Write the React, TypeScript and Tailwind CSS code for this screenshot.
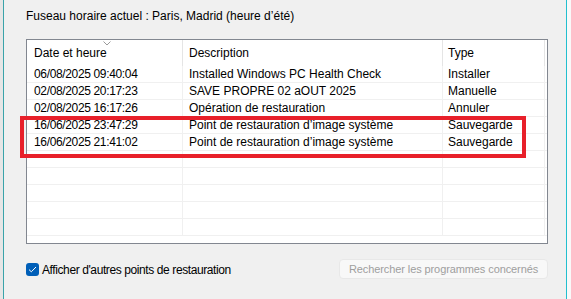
import React from 'react'

const rows = [
  ['06/08/2025 09:40:04', 'Installed Windows PC Health Check', 'Installer'],
  ['02/08/2025 20:17:23', 'SAVE PROPRE 02 aOUT 2025', 'Manuelle'],
  ['02/08/2025 16:17:26', 'Opération de restauration', 'Annuler'],
  ['16/06/2025 23:47:29', 'Point de restauration d’image système', 'Sauvegarde'],
  ['16/06/2025 21:41:02', 'Point de restauration d’image système', 'Sauvegarde'],
  ['', '', ''],
  ['', '', ''],
  ['', '', ''],
  ['', '', ''],
  ['', '', ''],
]

export default function App() {
  return (
    <div
      className="relative flex h-[299px] w-[571px] overflow-hidden bg-[#f0f0f0] text-[12px] text-black"
      style={{ fontFamily: '"Segoe UI", "Liberation Sans", Arial, sans-serif' }}
    >
      {/* window frame, left */}
      <div className="w-[3px] shrink-0 bg-[#e6e6e6]" />
      <div className="w-px shrink-0 bg-[#3aa3aa]" />

      <div className="flex w-[562px] shrink-0 flex-col">
        <p className="ml-[22px] mt-[7px] h-[18px] leading-[18px]">
          Fuseau horaire actuel : Paris, Madrid (heure d’été)
        </p>

        {/* restore points list */}
        <div className="ml-[22px] mt-[14px] h-[205px] w-[522px] overflow-hidden border border-[#828790] bg-white">
          <div className="relative flex h-[26px] items-center">
            <div className="flex h-full w-[156px] items-center border-r border-[#e5e5e5] pl-[7px]">Date et heure</div>
            <div className="flex h-full w-[260px] items-center border-r border-[#e5e5e5] pl-[6px]">Description</div>
            <div className="flex h-full w-[102px] items-center border-r border-[#e5e5e5] pl-[5px]">Type</div>
            <svg className="absolute left-[76px] top-[1px]" width="8" height="5" viewBox="0 0 8 5" fill="none">
              <path d="M0.5 0.5L4 4L7.5 0.5" stroke="#9a9a9a" strokeWidth="1" />
            </svg>
          </div>
          {rows.map((r, i) => (
            <div key={i} className="flex h-[17px] border-b border-[#f0f0f0] leading-[16px]">
              <div className="w-[156px] border-r border-[#f0f0f0] pl-[7px] whitespace-nowrap tracking-[-0.35px]">{r[0]}</div>
              <div className="w-[260px] border-r border-[#f0f0f0] pl-[6px] whitespace-nowrap">{r[1]}</div>
              <div className="w-[102px] border-r border-[#f0f0f0] pl-[5px] whitespace-nowrap">{r[2]}</div>
            </div>
          ))}
        </div>

        <div className="ml-[22px] mt-[15px] flex w-[522px] items-center justify-between">
          <label className="mt-[1px] flex items-center gap-[3px]">
            <span className="flex h-[13px] w-[13px] items-center justify-center rounded-[3px] bg-[#005fb8]">
              <svg width="9" height="7" viewBox="0 0 9 7" fill="none">
                <path d="M1 3.6L3.3 5.8L8 1" stroke="white" strokeWidth="1" />
              </svg>
            </span>
            <span className="leading-[16px] tracking-[-0.4px]">Afficher d'autres points de restauration</span>
          </label>
          <button
            disabled
            className="flex h-[20px] w-[209px] items-center whitespace-nowrap rounded-[4px] border border-[#e8e8e8] bg-[#f8f8f8] pl-[9px] text-[11px] tracking-[-0.1px] text-[#9e9e9e]"
          >
            Rechercher les programmes concernés
          </button>
        </div>
      </div>

      {/* window frame, right */}
      <div className="w-px shrink-0 bg-[#22bfcf]" />
      <div className="flex-1 bg-[#f9f9f9]" />

      {/* annotation */}
      <div className="absolute left-[20px] top-[116px] h-[42px] w-[506px] border-[4px] border-[#e8202a]" />
    </div>
  )
}
